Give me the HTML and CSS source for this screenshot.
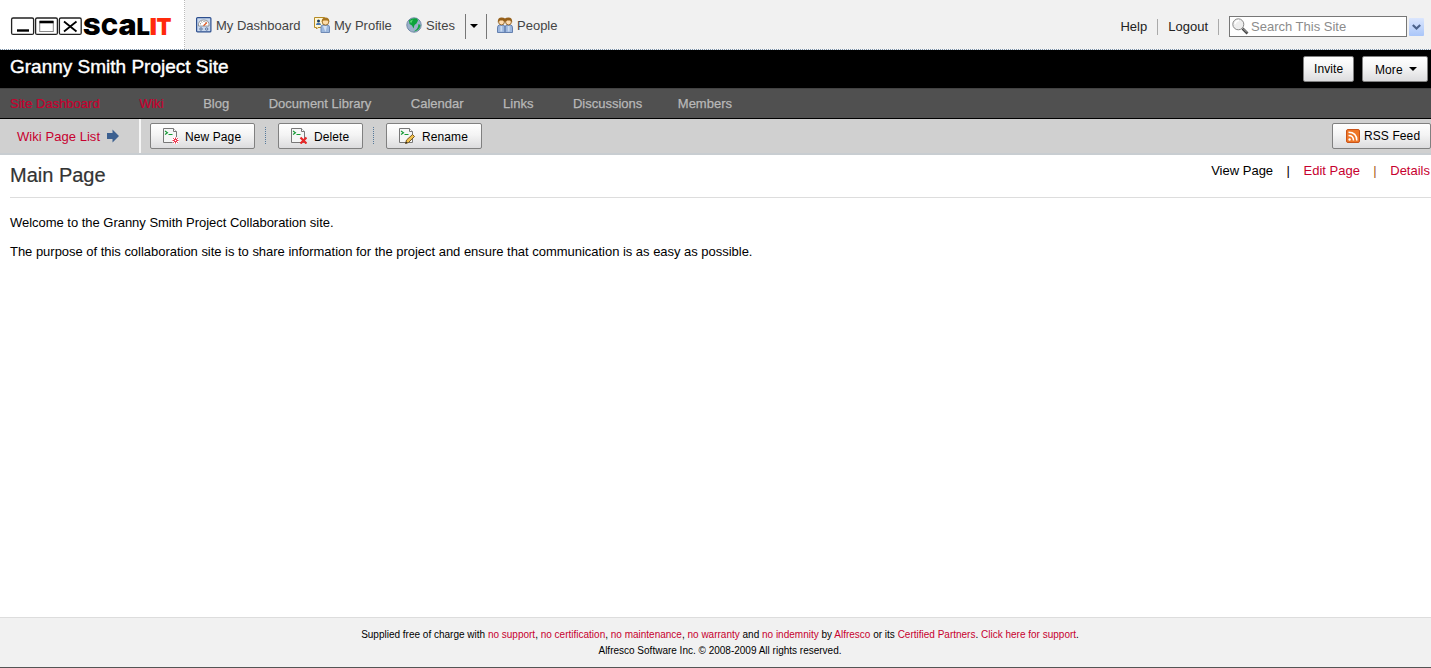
FILE: index.html
```
<!DOCTYPE html>
<html lang="en">
<head>
    <meta charset="UTF-8">
    <title>Granny Smith Project Site - Main Page</title>
    <link rel="stylesheet" href="styles.css">
</head>
<body>
<div class="header">
    <a class="logo" href="#">
        <svg width="184" height="49" viewBox="0 0 184 49">
            <g fill="#fff" stroke="#222" stroke-width="1.3">
                <rect x="11.6" y="18" width="22" height="16.4" rx="1.5"/>
                <rect x="35.6" y="18" width="21.8" height="16.4" rx="1.5"/>
                <rect x="59.4" y="18" width="21.8" height="16.4" rx="1.5"/>
            </g>
            <path d="M17 30.5h12" stroke="#000" stroke-width="2.4"/>
            <rect x="39.7" y="21.5" width="13.6" height="10" fill="none" stroke="#888"/>
            <path d="M39.5 22h14" stroke="#000" stroke-width="2.6"/>
            <path d="M64 21.5l12.5 10M76.5 21.5l-12.5 10" stroke="#000" stroke-width="1.8"/>
            <text class="logo-text" y="34.7"><tspan x="83" textLength="17.5" lengthAdjust="spacingAndGlyphs">S</tspan><tspan x="101" textLength="17" lengthAdjust="spacingAndGlyphs">C</tspan><tspan class="logo-tall" x="118.5" textLength="18" lengthAdjust="spacingAndGlyphs">a</tspan><tspan x="136.5" textLength="13.5" lengthAdjust="spacingAndGlyphs">L</tspan><tspan class="logo-red" x="149.5" textLength="7.5" lengthAdjust="spacingAndGlyphs">I</tspan><tspan class="logo-red" x="156.5" textLength="15" lengthAdjust="spacingAndGlyphs">T</tspan></text>
        </svg>
    </a>
    <div class="app-menu">
        <a class="app-item dashboard" href="#">
            <svg width="16" height="16" viewBox="0 0 16 16">
                <rect x=".6" y=".6" width="14.3" height="14.3" rx="1" fill="#c9d8ee" stroke="#2d4f8e" stroke-width="1.2"/>
                <path d="M2.5 9q-.5-6 5.300-6t5.200 6z" fill="#fff" stroke="#777" stroke-width=".7"/>
                <path d="M4 6.500l1 .5M5.500 4.500l.5 1M8 4v1M10 4.500l-.5 1" stroke="#555" stroke-width=".8"/>
                <path d="M7.500 8.700L11 5.500" stroke="#e0561e" stroke-width="1.200"/>
                <circle cx="5" cy="12" r="1.200" fill="#dce8f8" stroke="#4b6790" stroke-width=".9"/>
                <circle cx="10.700" cy="12" r="1.200" fill="#dce8f8" stroke="#4b6790" stroke-width=".9"/>
            </svg>
            My Dashboard
        </a>
        <a class="app-item profile" href="#">
            <svg width="16" height="16" viewBox="0 0 16 16">
                <path d="M.5.500h10v10H4L2.500 12v-1.500h-2z" fill="#fff6d2" stroke="#b58b25"/>
                <path d="M2 8c0-3 5-3 5 0z" fill="#4776b5"/>
                <circle cx="4.500" cy="4" r="1.500" fill="#17395f"/>
                <path d="M7 15.500V10q0-2 2-2h4q2.500 0 2.500 2v5.500z" fill="#9db8dd" stroke="#6f8ab5"/>
                <path d="M9 9h4l-1.500 6z" fill="#d3e1f4"/>
                <circle cx="11.500" cy="4.800" r="3.300" fill="#ffdda8" stroke="#8b5c13" stroke-width=".8"/>
                <path d="M7.700 5Q7.500.500 11.500.500T15.300 5L13.500 3.500H9.500z" fill="#a87520"/>
            </svg>
            My Profile
        </a>
        <a class="app-item sites" href="#">
            <svg width="16" height="16" viewBox="0 0 16 16">
                <circle cx="8" cy="8" r="7.200" fill="#9bb0ca" stroke="#7189a8"/>
                <path d="M3 3.500Q6 .500 11 1.500l1 2-1.500 3-2 1.500-1 3.500-1.500-3L3.500 7z" fill="#0ba33c"/>
                <path d="M12.500 7l2 1q-.500 4.500-4.500 6l-2.500.500q4.500-2 5-7.500z" fill="#14a744"/>
                <path d="M4 4l3-1.500-2 4z" fill="#5bda75"/>
            </svg>
            Sites
        </a>
        <span class="sites-menu"><i class="caret"></i></span>
        <a class="app-item people" href="#">
            <svg width="16" height="16" viewBox="0 0 16 16">
                <path d="M.5 15.500V11q0-3 2-3h3.500q2 0 2 3v4.500zM8 15.500V11q0-3 2-3h3.500q2 0 2 3v4.500z" fill="#9bb6df" stroke="#6480af"/>
                <path d="M4.300 9v5.500M11.700 9v5.500" stroke="#c9daf0" stroke-width="1.800"/>
                <circle cx="4.500" cy="5" r="2.900" fill="#ffdcb0" stroke="#805011" stroke-width=".8"/>
                <circle cx="11.500" cy="5" r="2.900" fill="#ffdcb0" stroke="#805011" stroke-width=".8"/>
                <path d="M.8 5.500Q.5.500 4.500.500q2.500 0 3.500 1 1-1 3.500-1 4 0 3.700 5L13.500 3.500H10L8 5 6 3.500H2.500z" fill="#96601a"/>
            </svg>
            People
        </a>
    </div>
    <div class="util-menu">
        <a class="util" href="#">Help</a>
        <a class="util" href="#">Logout</a>
        <div class="search">
            <svg width="17" height="17" viewBox="0 0 17 17">
                <path d="M10.500 10.500l5 5" stroke="#444" stroke-width="2.600"/>
                <path d="M11 10.500l4 4" stroke="#bbb"/>
                <circle cx="6.300" cy="6.300" r="5.500" fill="#eee" stroke="#888"/>
                <path d="M3 6q1-3.500 4-3.500" fill="none" stroke="#fff" stroke-width="1.500"/>
            </svg>
            <span>Search This Site</span>
        </div>
        <span class="search-menu">
            <svg width="15" height="18" viewBox="0 0 15 18"><path d="M3.800 7l3.700 3.500L11.200 7" fill="none" stroke="#4b628b" stroke-width="2.200"/></svg>
        </span>
    </div>
</div>

<div class="site-title">
    <h1>Granny Smith Project Site</h1>
    <a class="btn invite" href="#">Invite</a>
    <a class="btn more" href="#">More <i class="caret"></i></a>
</div>

<div class="site-nav">
    <a class="theme" href="#">Site Dashboard</a>
    <a class="theme" href="#">Wiki</a>
    <a href="#">Blog</a>
    <a href="#">Document Library</a>
    <a href="#">Calendar</a>
    <a href="#">Links</a>
    <a href="#">Discussions</a>
    <a href="#">Members</a>
</div>

<div class="toolbar">
    <a class="page-list" href="#">Wiki Page List
        <svg width="12" height="14" viewBox="0 0 12 14"><path d="M0 4h5.500V.500L12 7l-6.500 6.500V10H0z" fill="#3c6090"/></svg>
    </a>
    <a class="btn new-page" href="#">
        <svg width="16" height="16" viewBox="0 0 16 16">
            <path d="M.5.500h10l3 3v11H.5z" fill="#f5f6f6" stroke="#777"/>
            <path d="M10.500.500v3h3" fill="#fff" stroke="#777"/>
            <path d="M2 3l2.500 1.700L2 6.500M5.500 6.500h4" fill="none" stroke="#159a35" stroke-width="1.100"/>
            <circle cx="12.500" cy="12.500" r="3.500" fill="#fff"/>
            <path d="M12.500 9.500v6M9.500 12.500h6M10.200 10.200l4.600 4.600M14.800 10.200l-4.600 4.600" stroke="#e8112d" stroke-width=".9"/>
            <circle cx="12.500" cy="12.500" r=".8" fill="#fff"/>
        </svg>
        <span>New Page</span>
    </a>
    <span class="separator"></span>
    <a class="btn delete" href="#">
        <svg width="16" height="16" viewBox="0 0 16 16">
            <path d="M.5.500h10l3 3v11H.5z" fill="#f5f6f6" stroke="#777"/>
            <path d="M10.500.500v3h3" fill="#fff" stroke="#777"/>
            <path d="M2 3l2.500 1.700L2 6.500M5.500 6.500h4" fill="none" stroke="#159a35" stroke-width="1.100"/>
            <path d="M9.500 9.500l6 6M15.500 9.500l-6 6" stroke="#e82828" stroke-width="2.200"/>
        </svg>
        <span>Delete</span>
    </a>
    <span class="separator"></span>
    <a class="btn rename" href="#">
        <svg width="16" height="16" viewBox="0 0 16 16">
            <path d="M.5.500h10l3 3v11H.5z" fill="#f5f6f6" stroke="#777"/>
            <path d="M10.500.500v3h3" fill="#fff" stroke="#777"/>
            <path d="M2 3l2.500 1.700L2 6.500M5.500 6.500h4" fill="none" stroke="#159a35" stroke-width="1.100"/>
            <path d="M6.500 15.500l1-3.500 6-5.500 2 2-6 6z" fill="#f2c24d" stroke="#694b1b" stroke-width=".9"/>
            <path d="M6.500 15.500l.600-2 1.400 1.400z" fill="#222"/>
        </svg>
        <span>Rename</span>
    </a>
    <a class="btn rss" href="#">
        <svg width="14" height="14" viewBox="0 0 14 14">
            <rect x=".5" y=".5" width="13" height="13" rx="1.500" fill="#ee7627" stroke="#c9541a"/>
            <circle cx="3.600" cy="10.500" r="1.200" fill="#fff"/>
            <path d="M2.500 6.500q5 0 5 5M2.500 3.300q8.300 0 8.300 8.200" fill="none" stroke="#fff" stroke-width="1.500"/>
        </svg>
        RSS Feed
    </a>
</div>

<div class="content">
    <div class="page-head">
        <h2>Main Page</h2>
        <div class="page-actions">
            <span>View Page</span><span>|</span><a href="#">Edit Page</a><span class="divider">|</span><a href="#">Details</a>
        </div>
    </div>
    <p>Welcome to the Granny Smith Project Collaboration site.</p>
    <p>The purpose of this collaboration site is to share information for the project and ensure that communication is as easy as possible.</p>
</div>

<div class="footer">
    <div>Supplied free of charge with <a href="#">no support</a>, <a href="#">no certification</a>, <a href="#">no maintenance</a>, <a href="#">no warranty</a> and <a href="#">no indemnity</a> by <a href="#">Alfresco</a> or its <a href="#">Certified Partners</a>. <a href="#">Click here for support</a>.</div>
    <div>Alfresco Software Inc. © 2008-2009 All rights reserved.</div>
</div>
</body>
</html>
```
FILE: styles.css
```
* {
    box-sizing: border-box;
}

body {
    display: flex;
    flex-direction: column;
    height: 668px;
    margin: 0;
    font-family: "Liberation Sans", Arial, sans-serif;
    font-size: 13px;
    line-height: 16px;
    color: #000;
    background-color: #fff;
    white-space: nowrap;
    overflow: hidden;
}

a {
    color: #c7002f;
    text-decoration: none;
}

svg {
    display: block;
    flex: none;
}

h1, h2, p {
    margin: 0;
    font-weight: normal;
}

/* Top bar */
.header {
    display: flex;
    height: 50px;
    background-color: #f1f1f1;
    border-bottom: 1px dotted #7890a8;
}

.logo {
    width: 185px;
    background-color: #fff;
    border-right: 1px dotted #bbb;
}

.logo-text {
    font-family: Inter, sans-serif;
    font-weight: 900;
    font-size: 23px;
}

.logo-tall {
    font-size: 29px;
}

.logo-red {
    fill: #ff2a0c;
}

.app-menu {
    display: flex;
    align-items: center;
    height: 50px;
    padding-left: 11px;
}

.app-item {
    display: flex;
    align-items: center;
    gap: 4px;
    padding-top: 1px;
    color: #444;
}

.app-item svg {
    margin-top: -2px;
}

.dashboard {
    width: 118px;
}

.profile {
    width: 92px;
}

.sites {
    width: 59px;
}

.sites-menu {
    display: flex;
    align-items: center;
    justify-content: center;
    width: 22px;
    height: 25px;
    margin: 2px 10px 0 0;
    padding-right: 4px;
    border-left: 1px solid #777;
    border-right: 1px solid #777;
}

.caret {
    border: 4px solid transparent;
    border-top-color: #000;
    border-bottom: 0;
}

.util-menu {
    display: flex;
    align-items: center;
    margin-left: auto;
    padding: 4px 7px 0 0;
}

.util {
    margin-right: 10px;
    padding-right: 10px;
    color: #222;
    border-right: 1px solid #aaa;
}

.search {
    display: flex;
    align-items: center;
    gap: 2px;
    width: 178px;
    height: 21px;
    padding-left: 2px;
    color: #8c8c8c;
    background-color: #fff;
    border: 1px solid #777;
}

.search-menu {
    margin-left: 2px;
    background: linear-gradient(#dbe6fd, #aac6f9);
    border-radius: 1px;
}

/* Site title and navigation */
.site-title {
    display: flex;
    height: 38px;
    padding: 6px 3px 0 10px;
    background-color: #000;
}

.site-title h1 {
    margin-right: auto;
    font-size: 19px;
    line-height: 21px;
    color: #fff;
    -webkit-text-stroke: 0.4px #fff;
}

.btn {
    display: flex;
    align-items: center;
    gap: 6px;
    height: 26px;
    font-size: 12px;
    letter-spacing: 0.1px;
    color: #000;
    background: linear-gradient(#fff, #f4f4f4 45%, #dcdcde);
    border: 1px solid #808080;
    border-radius: 2px;
}

.invite {
    width: 51px;
    margin-right: 8px;
    padding-left: 10px;
}

.more {
    width: 66px;
    padding: 2px 0 0 12px;
}

.more .caret {
    margin-top: -2px;
}

.site-nav {
    display: flex;
    gap: 39.5px;
    height: 31px;
    padding: 7px 10px 0;
    background-color: #505050;
    border-bottom: 1px solid #000;
    border-top: 1px solid #424242;
}

.site-nav a {
    color: #b8b8b8;
    -webkit-text-stroke: 0.25px #b8b8b8;
}

.site-nav .theme {
    color: #c7002f;
    -webkit-text-stroke: 0.2px #c7002f;
}

.site-nav a:last-child {
    margin-left: -4px;
}

/* Wiki toolbar */
.toolbar {
    display: flex;
    height: 36px;
    padding-top: 4px;
    background: linear-gradient(#f6f6f6, #f6f6f6) 139px 0 / 2px 34px no-repeat #d0d0d0;
    border-bottom: 2px solid #c8cdd1;
}

.page-list {
    display: flex;
    gap: 7px;
    width: 150px;
    padding: 6px 0 0 17px;
    letter-spacing: 0.05px;
}

.new-page, .delete, .rename {
    padding-left: 12px;
}

.toolbar .btn span {
    padding-top: 2px;
}

.new-page {
    width: 105px;
}

.delete {
    width: 85px;
    gap: 7px;
}

.rename {
    width: 96px;
    gap: 7px;
}

.separator {
    height: 17px;
    margin: 4px 12px 0 10px;
    border-left: 1px dotted #55799b;
}

.rss {
    width: 99px;
    margin-left: auto;
    padding-left: 13px;
    gap: 4px;
}

/* Page */
.content {
    flex: 1;
    padding-left: 10px;
}

.page-head {
    display: flex;
    justify-content: space-between;
    height: 43px;
    margin-bottom: 17px;
    border-bottom: 1px solid #ddd;
}

.page-head h2 {
    padding-top: 9px;
    font-size: 20px;
    line-height: 23px;
    color: #333;
    -webkit-text-stroke: 0.2px #333;
}

.page-actions {
    display: flex;
    gap: 13.5px;
    padding: 8px 1px 0 0;
}

.divider {
    color: #a66020;
}

.content p {
    margin-bottom: 13px;
    letter-spacing: -0.025px;
}

.footer {
    height: 51px;
    padding-top: 9px;
    padding-left: 9px;
    font-size: 10px;
    text-align: center;
    background-color: #f1f1f1;
    border-top: 1px solid #ddd;
    border-bottom: 1px solid #555;
}
```
